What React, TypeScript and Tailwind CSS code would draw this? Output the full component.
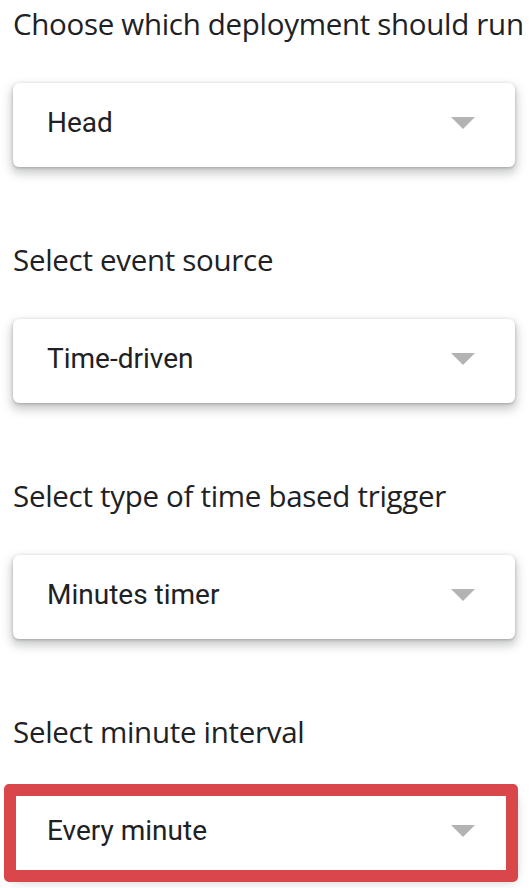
import React from 'react';

type Field = { label: string; value: string; highlighted?: boolean };

const FIELDS: Field[] = [
  { label: 'Choose which deployment should run', value: 'Head' },
  { label: 'Select event source', value: 'Time-driven' },
  { label: 'Select type of time based trigger', value: 'Minutes timer' },
  { label: 'Select minute interval', value: 'Every minute', highlighted: true },
];

const Caret: React.FC = () => (
  <svg width="24" height="12" viewBox="0 0 24 12" className="shrink-0">
    <path d="M0 0h24L12 12z" fill="#b3b3b3" />
  </svg>
);

const SelectBox: React.FC<{ value: string; highlighted?: boolean }> = ({ value, highlighted }) => (
  <div className="relative h-[84px] rounded-[6px] bg-white shadow-[0_1px_3px_rgba(60,64,67,0.32),0_5px_10px_2px_rgba(60,64,67,0.26)]">
    <div className="flex h-full items-center justify-between pl-[34px] pr-[40px] pb-[5px]">
      <span className="text-[28px] leading-none text-[#202124] font-['Roboto',sans-serif]">{value}</span>
      <Caret />
    </div>
    {/* red annotation frame drawn over the last select */}
    {highlighted && (
      <div className="absolute -left-[9px] -right-[3px] -top-[7px] -bottom-[7px] rounded-[5px] border-[12px] border-[#d9474a]" />
    )}
  </div>
);

export default function App() {
  return (
    <div className="w-[530px] h-[888px] overflow-hidden bg-white pl-[13px] pr-[15px] pt-[4px] font-['Open_Sans',sans-serif]">
      {FIELDS.map((f) => (
        <div key={f.label} className="h-[236px]">
          <div className="h-[40px] leading-[40px] text-[29.5px] text-[#202124] whitespace-nowrap tracking-[-0.3px]">
            {f.label}
          </div>
          <div className="mt-[39px]">
            <SelectBox value={f.value} highlighted={f.highlighted} />
          </div>
        </div>
      ))}
    </div>
  );
}
